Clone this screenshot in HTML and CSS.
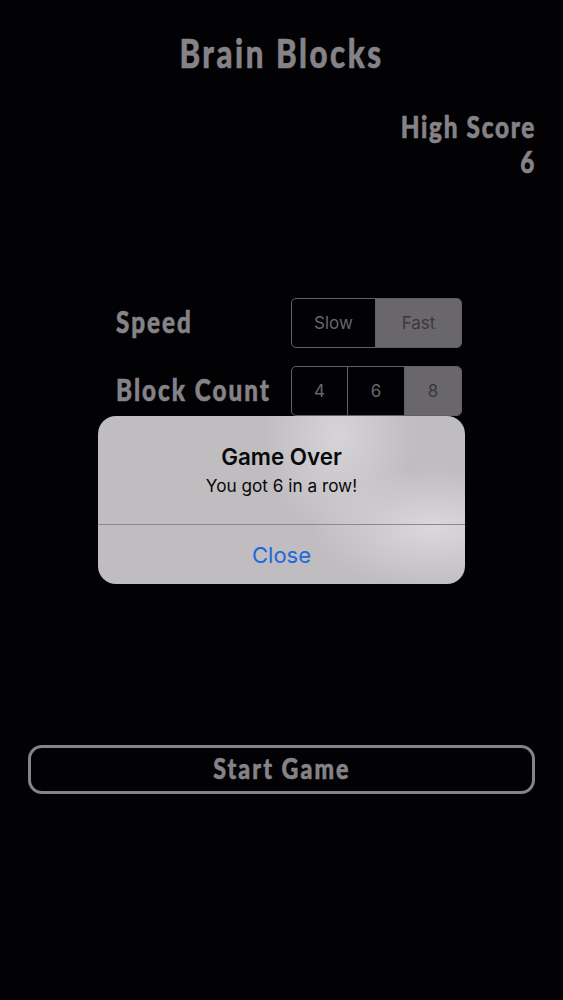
FILE: index.html
```html
<!DOCTYPE html>
<html lang="en">

<head>
    <meta charset="UTF-8">
    <meta name="viewport" content="width=device-width, initial-scale=1.0">
    <title>Brain Blocks</title>
    <link rel="stylesheet" href="styles.css">
</head>

<body>
    <main class="game">
        <h1 class="marker title">Brain Blocks</h1>

        <div class="high-score">
            <div class="marker score-label">High Score</div>
            <div class="marker score-value">6</div>
        </div>

        <div class="settings">
            <div class="setting">
                <span class="marker speed-label">Speed</span>
                <div class="segments speed">
                    <button type="button">Slow</button>
                    <button type="button" class="selected">Fast</button>
                </div>
            </div>
            <div class="setting">
                <span class="marker count-label">Block Count</span>
                <div class="segments count">
                    <button type="button">4</button>
                    <button type="button">6</button>
                    <button type="button" class="selected">8</button>
                </div>
            </div>
        </div>

        <button type="button" class="start"><span class="marker start-label">Start Game</span></button>
    </main>

    <div class="alert" role="alertdialog">
        <div class="alert-body">
            <h2>Game Over</h2>
            <p>You got 6 in a row!</p>
        </div>
        <button type="button" class="alert-close">Close</button>
    </div>
</body>

</html>
```

FILE: styles.css
```css
* {
    box-sizing: border-box;
}

body {
    margin: 0;
    background-color: #020104;
    color: #858387;
    font-family: Inter, "Liberation Sans", sans-serif;
}

h1,
h2,
p {
    margin: 0;
}

button {
    padding: 0;
    border: none;
    background: none;
    color: inherit;
    font-family: inherit;
    cursor: pointer;
}

.game {
    display: flex;
    flex-direction: column;
    height: 1000px;
    padding: 29px 28px 0;
}

.marker {
    font-family: "Marker Felt", Lato, sans-serif;
    font-weight: 900;
    white-space: nowrap;
    -webkit-text-stroke: 0.6px currentColor;
}

.title {
    height: 48px;
    font-size: 39px;
    line-height: 48px;
    letter-spacing: 3.2px;
    text-align: center;
    transform: scaleX(0.8);
}

.high-score {
    height: 70px;
    margin-top: 31px;
    font-size: 29px;
    line-height: 35px;
    text-align: right;
}

.score-label,
.score-value {
    letter-spacing: 2px;
    transform: translateX(1px) scale(0.84, 1.06);
    transform-origin: right;
}

.settings {
    width: 346px;
    margin: 120px 0 0 88px;
}

.setting {
    display: flex;
    align-items: center;
    justify-content: space-between;
    height: 50px;
    margin-bottom: 18px;
}

.speed-label,
.count-label {
    width: 175px;
    font-size: 31px;
    line-height: 48px;
    letter-spacing: 2.6px;
    transform: translateY(-2px) scaleX(0.78);
    transform-origin: left;
}

.segments {
    display: grid;
    flex: none;
    width: 171px;
    height: 50px;
    overflow: hidden;
    border: 1px solid #626065;
    border-radius: 5px;
}

.speed {
    grid-template-columns: 83px 1fr;
}

.count {
    grid-template-columns: 55px 57px 1fr;
}

.segments button {
    color: #68666a;
    font-size: 17px;
}

.segments button + button {
    border-left: 1px solid #626065;
}

.segments .selected {
    background-color: #69676b;
    color: #3b393d;
}

.start {
    height: 49px;
    margin-top: 311px;
    border: 3px solid #858387;
    border-radius: 14px;
}

.start-label {
    display: inline-block;
    font-size: 29px;
    line-height: 42px;
    letter-spacing: 2.6px;
    transform: translateY(-2px) scaleX(0.8);
}

.alert {
    position: absolute;
    top: 416px;
    left: 98px;
    width: 367px;
    height: 168px;
    overflow: hidden;
    border-radius: 18px;
    background:
        radial-gradient(ellipse 75px 100px at 240px 20px, #d6d4d7, transparent),
        radial-gradient(ellipse 120px 60px at 335px 112px, #dad8dc, transparent),
        #bfbdc0;
    color: #09080b;
    text-align: center;
}

.alert-body {
    height: 109px;
    padding-top: 26px;
    border-bottom: 1px solid #8b898d;
}

.alert h2 {
    font-size: 22.4px;
    font-weight: 600;
    line-height: 30px;
}

.alert p {
    font-size: 17.2px;
    line-height: 27px;
}

.alert-close {
    width: 100%;
    height: 59px;
    color: #2067df;
    font-size: 22px;
}
```
